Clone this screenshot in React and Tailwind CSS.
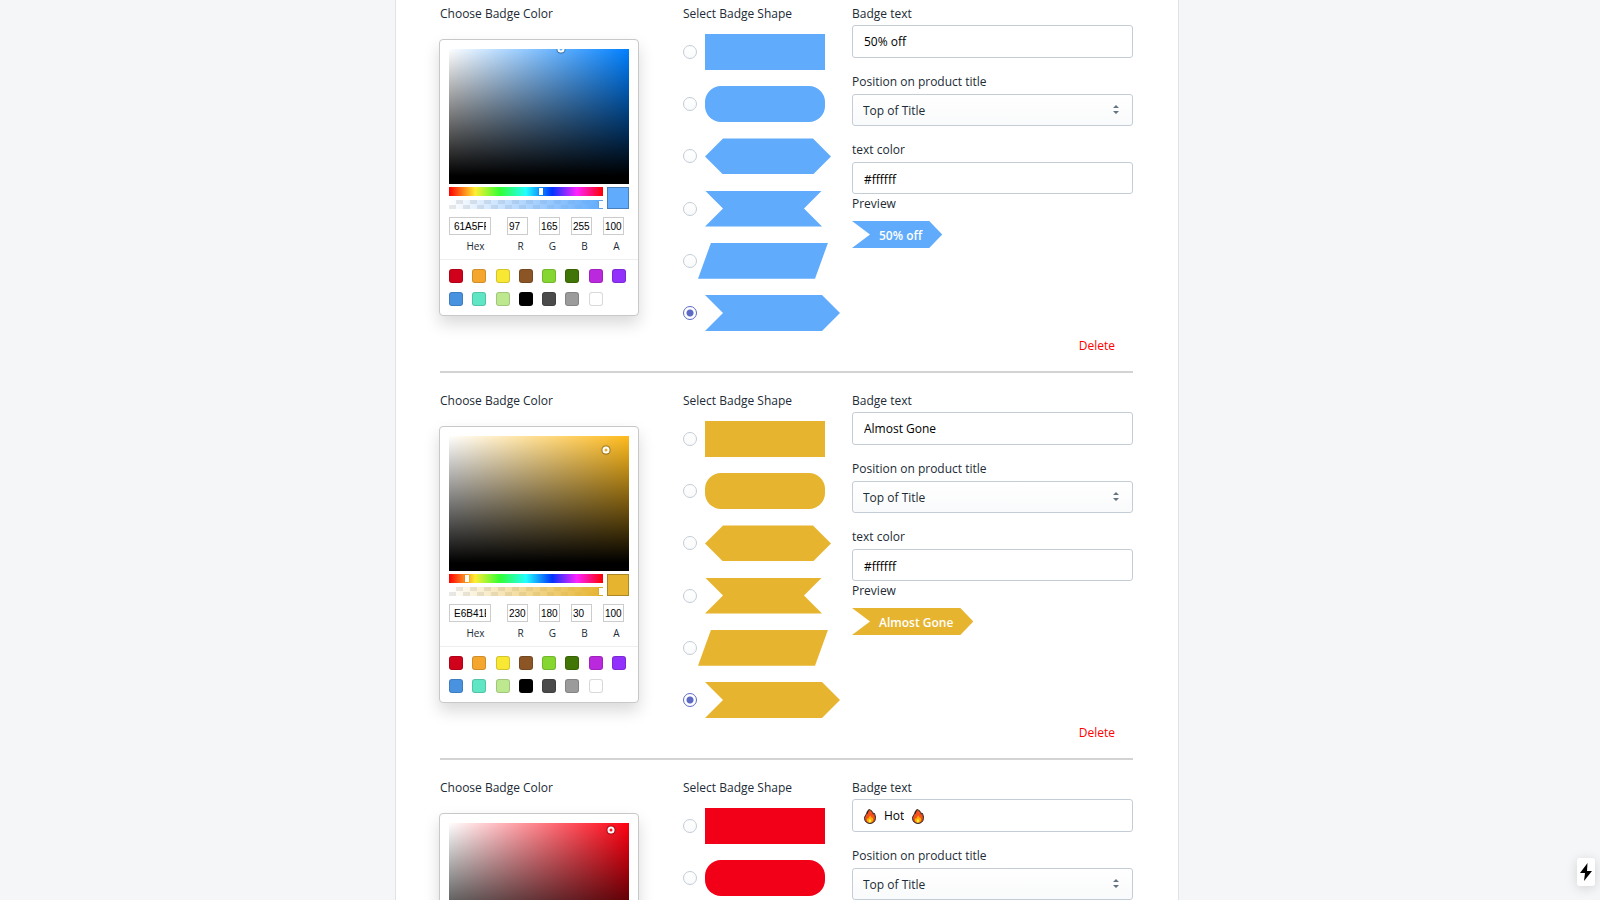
import { useState } from "react";

const PRESETS = [
  ["Red", "bg-[#d0021b]"],
  ["Orange", "bg-[#f5a62f]"],
  ["Yellow", "bg-[#f8e733]"],
  ["Brown", "bg-[#8b5525]"],
  ["Lime", "bg-[#86d632]"],
  ["Green", "bg-[#417505]"],
  ["Magenta", "bg-[#bb29df]"],
  ["Violet", "bg-[#9131fb]"],
  ["Blue", "bg-[#4892e0]"],
  ["Aqua", "bg-[#60e5c5]"],
  ["Light green", "bg-[#bee890]"],
  ["Black", "bg-black"],
  ["Dark gray", "bg-[#4a4a4a]"],
  ["Gray", "bg-[#9b9b9b]"],
  ["White", "bg-white"],
];

const SHAPES = [
  ["Rectangle", "w-[120px]"],
  ["Rounded", "w-[120px] rounded-2xl"],
  [
    "Hexagon",
    "w-[126px] [clip-path:polygon(18px_0,108px_0,100%_50%,108px_100%,18px_100%,0_50%)]",
  ],
  [
    "Ribbon",
    "w-[117px] [clip-path:polygon(0_0,100%_0,99px_50%,100%_100%,0_100%,18px_50%)]",
  ],
  [
    "Parallelogram",
    "w-[130px] -ml-[7px] [clip-path:polygon(13px_0,100%_0,117px_100%,0_100%)]",
  ],
  [
    "Arrow",
    "w-[135px] [clip-path:polygon(0_0,117px_0,100%_50%,117px_100%,0_100%,18px_50%)]",
  ],
];

const BADGES = [
  {
    id: "sale",
    text: "50% off",
    color: "#61abfc",
    hue: "#0080ff",
    hex: "61A5FF",
    rgba: [97, 165, 255, 100],
    huePos: 60,
    point: { left: "62%", top: "0%" },
  },
  {
    id: "stock",
    text: "Almost Gone",
    color: "#e6b42e",
    hue: "#ffbb1c",
    hex: "E6B41E",
    rgba: [230, 180, 30, 100],
    huePos: 12,
    point: { left: "87%", top: "10%" },
  },
  {
    id: "hot",
    text: "Hot",
    flames: true,
    color: "#f20018",
    hue: "#ff0010",
    hex: "F20018",
    rgba: [242, 0, 24, 100],
    huePos: 99,
    point: { left: "90%", top: "5%" },
  },
];

function Flame() {
  return (
    <svg viewBox="0 0 12 15" className="h-[15px] w-3 shrink-0" aria-hidden="true">
      <path
        d="M5 .6C7.600 1.200 9 3.200 9.400 5.200l.8-.9c1 1.600 1.300 3.400 1.200 5.200C11.200 12.500 9 14.400 6 14.400S.7 12.500.6 9.600C.5 7.200 2 6 2.700 4.300 3.200 3 3.500 1.600 5 .6z"
        fill="#f4511e"
        stroke="#1b1b1b"
        strokeWidth="1"
      />
      <path d="M5 1c-.8 1.500-.6 2.600-1.500 4C2.600 4.600 3 2 5 1z" fill="#1b1b1b" />
      <path
        d="M6.300 6.200c.4 1.500 1.400 1.800 1.800 3 .3-.3.500-.6.600-1 1 2.300.2 5.400-2.700 5.400s-3.600-2.600-2.800-4.400c.3.500.5.700.9.900.3-1.600 1.600-2.200 2.200-3.900z"
        fill="#ffb300"
      />
      <path d="M6 9.800c1 1 1.600 3.600 0 3.800-1.700-.2-1.100-2.700 0-3.800z" fill="#ffee58" />
    </svg>
  );
}

function ColorInput({ label, value, className, inputClassName }) {
  return (
    <label className={`flex flex-col ${className}`}>
      <input
        defaultValue={value}
        className={`h-[18px] border border-[#ccc] bg-white pt-px font-['Liberation_Sans'] text-[10px] text-black outline-none ${inputClassName}`}
      />
      <span className="mt-[3px] mb-px text-center text-[10px] leading-4">{label}</span>
    </label>
  );
}

function ColorPicker({ badge }) {
  const { color, hue, hex, rgba, huePos, point } = badge;

  return (
    <div className="w-[200px] rounded border border-[#c8c8c8] bg-white shadow-[0_8px_16px_rgba(0,0,0,0.15)]">
      <div className="px-[9px] pt-[9px]">
        {/* Saturation */}
        <div className="relative h-[135px] overflow-hidden" style={{ backgroundColor: hue }}>
          <div className="absolute inset-0 bg-linear-to-r from-white to-transparent" />
          <div className="absolute inset-0 bg-linear-to-t from-black from-6% to-transparent" />
          <div
            className="absolute size-[7px] -translate-1/2 rounded-full border-2 border-white shadow-[0_0_1px_1px_rgba(0,0,0,0.4)]"
            style={point}
          />
        </div>

        {/* Hue, alpha and current color */}
        <div className="mt-[3px] flex gap-1">
          <div className="flex flex-1 flex-col gap-1">
            <div className="relative h-[9px] bg-[linear-gradient(to_right,#f00_0%,#fe3_17%,#3f3_33%,#2ff_50%,#03f_67%,#f2f_83%,#f00_100%)]">
              <div
                className="absolute top-px h-[7px] w-1 -translate-x-1/2 bg-white shadow-[0_0_1px_rgba(0,0,0,0.6)]"
                style={{ left: `${huePos}%` }}
              />
            </div>
            <div className="relative h-[9px] overflow-hidden bg-[conic-gradient(#e8e8e8_25%,#fff_0_50%,#e8e8e8_0_75%,#fff_0)] bg-size-[14px_9px]">
              <div
                className="absolute inset-0"
                style={{ background: `linear-gradient(to right, transparent, ${color})` }}
              />
              <div className="absolute top-px right-0 h-[7px] w-1 bg-white shadow-[0_0_1px_rgba(0,0,0,0.6)]" />
            </div>
          </div>
          <div
            className="size-[22px] border border-black/25"
            style={{ backgroundColor: color }}
          />
        </div>

        {/* Values */}
        <div className="mt-2 flex gap-[5px]">
          <ColorInput
            label="Hex"
            value={hex}
            className="w-[53px] shrink-0"
            inputClassName="w-[42px] px-1"
          />
          {["R", "G", "B", "A"].map((name, i) => (
            <ColorInput
              key={name}
              label={name}
              value={rgba[i]}
              className="w-[27px] shrink-0"
              inputClassName="w-[21px] px-px"
            />
          ))}
        </div>
      </div>

      {/* Presets */}
      <div className="mt-1 grid grid-cols-8 gap-y-[9px] border-t border-[#eee] pt-[9px] pr-[3px] pb-[9px] pl-[9px]">
        {PRESETS.map(([name, bg]) => (
          <button
            key={name}
            type="button"
            aria-label={name}
            className={`size-[14px] rounded-[3px] border border-black/15 ${bg}`}
          />
        ))}
      </div>
    </div>
  );
}

function ShapeSelect({ badge, shape, onChange }) {
  return (
    <div className="mt-[10px] flex h-[297px] flex-col justify-between">
      {SHAPES.map(([name, style]) => (
        <label key={name} className="flex items-center gap-2">
          <input
            type="radio"
            name={`shape-${badge.id}`}
            aria-label={name}
            checked={shape === name}
            onChange={() => onChange(name)}
            className="size-[14px] shrink-0 appearance-none rounded-full border border-[#c4cdd5] bg-linear-to-b from-white to-[#f9fafb] checked:border-[#5c6ac4] checked:bg-[radial-gradient(circle,#5c6ac4_0_3px,#fff_4px)]"
          />
          <span className={`block h-9 shrink-0 ${style}`} style={{ backgroundColor: badge.color }} />
        </label>
      ))}
    </div>
  );
}

function BadgeForm({ badge }) {
  const [shape, setShape] = useState("Arrow");
  const [text, setText] = useState(badge.text);

  return (
    <section className="mb-[18px] border-b-2 border-[#d3d3d3]">
      <div className="flex h-[327px]">
        <div className="w-[243px] shrink-0">
          <h2>Choose Badge Color</h2>
          <div className="mt-[15px] -ml-px">
            <ColorPicker badge={badge} />
          </div>
        </div>

        <div className="w-[169px] shrink-0">
          <h2>Select Badge Shape</h2>
          <ShapeSelect badge={badge} shape={shape} onChange={setShape} />
        </div>

        <div className="min-w-0 flex-1">
          <label htmlFor={`${badge.id}-text`} className="block">
            Badge text
          </label>
          <div className="mt-px flex h-[33px] items-center gap-2 rounded-[3px] border border-[#c4cdd5] px-[11px] pt-px text-black">
            {badge.flames && <Flame />}
            <input
              id={`${badge.id}-text`}
              value={text}
              onChange={(e) => setText(e.target.value)}
              className={`min-w-0 bg-transparent outline-none ${badge.flames ? "w-5" : "w-full"}`}
            />
            {badge.flames && <Flame />}
          </div>

          <label htmlFor={`${badge.id}-position`} className="mt-[14px] block">
            Position on product title
          </label>
          <div className="relative mt-[2px]">
            <select
              id={`${badge.id}-position`}
              className="block h-8 w-full appearance-none rounded-[3px] border border-[#c4cdd5] bg-linear-to-b from-white to-[#f9fafb] px-[10px] pt-[2px] outline-none"
            >
              <option>Top of Title</option>
              <option>Bottom of Title</option>
            </select>
            <svg
              viewBox="0 0 6 9"
              className="pointer-events-none absolute top-[11px] right-[14px] h-[9px] w-[6px] fill-[#637381]"
              aria-hidden="true"
            >
              <path d="M3 0l3 3H0zM3 9L0 6h6z" />
            </svg>
          </div>

          <label htmlFor={`${badge.id}-color`} className="mt-[14px] block">
            text color
          </label>
          <input
            id={`${badge.id}-color`}
            defaultValue="#ffffff"
            className="mt-[2px] block h-8 w-full rounded-[3px] border border-[#c4cdd5] px-[11px] pt-[2px] text-black outline-none"
          />

          <p>Preview</p>
          <span
            className="mt-[7px] inline-block h-[27px] pt-px pr-5 pl-[27px] leading-[27px] font-semibold text-white [clip-path:polygon(0_0,calc(100%-13px)_0,100%_50%,calc(100%-13px)_100%,0_100%,18px_50%)]"
            style={{ backgroundColor: badge.color }}
          >
            {text}
          </span>
        </div>
      </div>

      <div className="flex h-10 justify-end pt-[5px] pr-[18px]">
        <button type="button" className="h-5 text-[#ff0000]">
          Delete
        </button>
      </div>
    </section>
  );
}

export default function App() {
  return (
    <div className="h-screen overflow-hidden bg-[#f4f6f8] pr-[26px] font-['Open_Sans',sans-serif] text-[12px] leading-5 text-[#212b36]">
      <main className="mx-auto w-full max-w-[784px] border-x border-[#dfe3e8] bg-white pt-1 pr-[45px] pl-11">
        {BADGES.map((badge) => (
          <BadgeForm key={badge.id} badge={badge} />
        ))}
      </main>

      <button
        type="button"
        aria-label="Quick actions"
        className="fixed right-[5px] bottom-[14px] flex h-7 w-[18px] items-center justify-center rounded-[3px] bg-white shadow-[0_2px_12px_rgba(0,0,0,0.15)]"
      >
        <svg viewBox="0 0 12 18" className="h-[18px] w-3" aria-hidden="true">
          <path d="M7.500 0L0 10h5L4 18l8-10H7z" />
        </svg>
      </button>
    </div>
  );
}
